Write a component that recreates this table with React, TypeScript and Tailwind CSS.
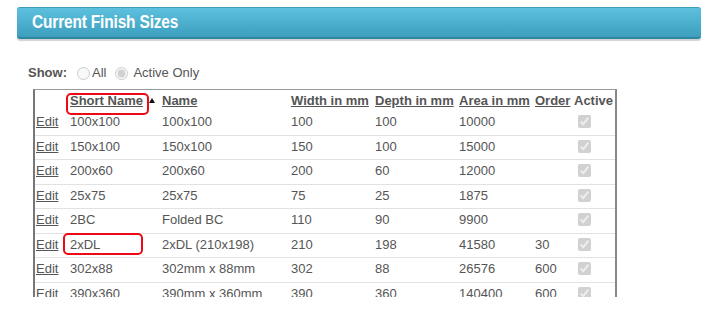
import React from "react";

const rows = [
  ["100x100", "100x100", "100", "100", "10000", ""],
  ["150x100", "150x100", "150", "100", "15000", ""],
  ["200x60", "200x60", "200", "60", "12000", ""],
  ["25x75", "25x75", "75", "25", "1875", ""],
  ["2BC", "Folded BC", "110", "90", "9900", ""],
  ["2xDL", "2xDL (210x198)", "210", "198", "41580", "30"],
  ["302x88", "302mm x 88mm", "302", "88", "26576", "600"],
  ["390x360", "390mm x 360mm", "390", "360", "140400", "600"],
];

const grid = "grid grid-cols-[35px_92px_129px_84px_84px_76px_39px_41px]";

export default function App() {
  return (
    <div
      className="relative w-[709px] h-[309px] overflow-hidden bg-white text-[13px] text-[#555]"
      style={{ fontFamily: '"Liberation Sans", Arial, sans-serif' }}
    >
      <div className="pt-[7px]">
        <div className="ml-[17px] w-[684px] h-[32px] rounded-[3px] border-t border-[#3c9dbb] border-b-2 border-b-[#2f86a3] bg-gradient-to-b from-[#5cc0de] to-[#3d9fbe] shadow-[0_2px_1px_rgba(0,0,0,0.18)] flex items-center pl-[15px]">
          <span className="inline-block origin-left scale-x-[0.86] text-[18px] font-bold text-white tracking-[-0.2px]">
            Current Finish Sizes
          </span>
        </div>
      </div>

      <div className="ml-[28px] mt-[26px] flex items-center h-[16px]">
        <span className="font-bold">Show:</span>
        <input type="radio" name="show" className="ml-[10px] w-[13px] h-[13px] accent-[#999]" disabled />
        <span className="ml-[2px]">All</span>
        <input type="radio" name="show" className="ml-[9px] w-[13px] h-[13px] accent-[#999]" defaultChecked disabled />
        <span className="ml-[5px]">Active Only</span>
      </div>

      <div className="ml-[33px] mt-[8px] w-[584px] h-[208px] overflow-hidden border-t border-l-2 border-r-2 border-t-[#999] border-l-[#777] border-r-[#888]">
        <div className={`${grid} h-[21px] items-center font-bold`}>
          <span />
          <span className="flex items-center">
            <span className="underline">Short Name</span>
          </span>
          <span className="underline">Name</span>
          <span className="underline">Width in mm</span>
          <span className="underline">Depth in mm</span>
          <span className="underline">Area in mm</span>
          <span className="underline">Order</span>
          <span>Active</span>
        </div>
        {rows.map((r, i) => (
          <div
            key={i}
            className={`${grid} h-[24.5px] items-center pb-[2px] border-b border-[#e2e2e2]`}
          >
            <span className="pl-[1px] underline">Edit</span>
            <span>{r[0]}</span>
            <span>{r[1]}</span>
            <span>{r[2]}</span>
            <span>{r[3]}</span>
            <span>{r[4]}</span>
            <span>{r[5]}</span>
            <span className="flex pl-[4px]">
              <input type="checkbox" className="w-[13px] h-[13px]" checked readOnly disabled />
            </span>
          </div>
        ))}
      </div>

      {/* sort arrow */}
      <svg className="absolute left-[149px] top-[98px]" width="6" height="5" viewBox="0 0 6 5">
        <path d="M0 5 L3 0 L6 5 Z" fill="#111" />
      </svg>

      {/* red annotation boxes */}
      <div className="absolute left-[66px] top-[93px] w-[83px] h-[22px] rounded-[5px] border-2 border-[#ee0a14]" />
      <div className="absolute left-[63px] top-[233px] w-[80px] h-[22px] rounded-[5px] border-2 border-[#ee0a14]" />
    </div>
  );
}
